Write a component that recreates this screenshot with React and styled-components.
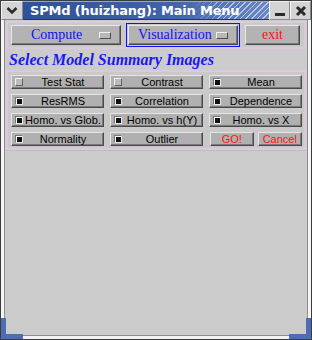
import styled, { createGlobalStyle } from "styled-components";

const Global = createGlobalStyle`
  html, body {
    margin: 0;
    padding: 0;
    background: #cccccc;
  }
`;

const Window = styled.div`
  position: relative;
  box-sizing: border-box;
  width: 312px;
  height: 340px;
  display: flex;
  flex-direction: column;
  background: #cccccc;
  border: 1px solid #3c3c3c;
  box-shadow: inset 0 0 0 3px #f4f4f4, inset 0 0 0 4px #8e8e8e;
  overflow: hidden;
`;

const TitleBar = styled.div`
  display: flex;
  height: 19px;
  background: #e6e6e6;
`;

const FrameButton = styled.div`
  box-sizing: border-box;
  width: ${(p) => p.$w}px;
  height: 19px;
  display: flex;
  align-items: center;
  justify-content: center;
  background: #d4d4d4;
  border: 1px solid;
  border-color: #f4f4f4 #8a8a8a #8a8a8a #f4f4f4;
`;

const Title = styled.div`
  position: relative;
  flex: 1;
  display: flex;
  align-items: center;
  padding-left: 7px;
  color: #ffffff;
  font: bold 13px "DejaVu Sans", sans-serif;
  letter-spacing: -0.2px;
  background: linear-gradient(90deg, #2f5199 0%, #4063a9 60%, #6a88c4 100%);
  border-top: 1px solid #90a8d8;
  border-bottom: 1px solid #1d3670;
  overflow: hidden;

  &::after {
    content: "";
    position: absolute;
    top: 0;
    bottom: 0;
    right: 0;
    width: 76px;
    background: repeating-linear-gradient(
      -45deg,
      rgba(255, 255, 255, 0.55) 0 1px,
      transparent 1px 4px
    );
    -webkit-mask-image: linear-gradient(90deg, transparent, #000 40%);
    mask-image: linear-gradient(90deg, transparent, #000 40%);
  }
`;

const TitleText = styled.span`
  position: relative;
  z-index: 1;
`;

const Body = styled.div`
  flex: 1;
  display: flex;
  flex-direction: column;
  padding: 1px 5px 0 5px;
`;

const Ring = styled.div`
  border: 2px solid #dccadc;
  background: #c9c9c9;
`;

const MenuBar = styled(Ring)`
  display: flex;
  gap: 3px;
  padding: 0 1px;
  height: 24px;
  align-items: center;
`;

const MenuCell = styled.div`
  box-sizing: border-box;
  width: ${(p) => p.$w}px;
  height: 24px;
  padding: 1px;
  border: 1px solid ${(p) => (p.$focus ? "#1010ff" : "transparent")};
  display: flex;
`;

const MenuButton = styled.div`
  flex: 1;
  position: relative;
  display: flex;
  align-items: center;
  justify-content: ${(p) => (p.$menu ? "flex-start" : "center")};
  padding-left: ${(p) => (p.$menu ? p.$indent : 0)}px;
  background: #b3b3b3;
  border: 1px solid;
  border-color: #e8e8e8 #4a4a4a #4a4a4a #e8e8e8;
  box-shadow: inset -1px -1px 0 #777777;
  color: ${(p) => p.$color};
  font: 14px "Liberation Serif", serif;
`;

const MenuIndicator = styled.span`
  position: absolute;
  right: 9px;
  top: 6px;
  width: 10px;
  height: 5px;
  background: #b8b8b8;
  border: 1px solid;
  border-color: #f0f0f0 #505050 #505050 #f0f0f0;
`;

const Heading = styled.div`
  height: 18px;
  padding: 3px 0 0 3px;
  color: #1a1af0;
  font: italic bold 16px "Liberation Serif", serif;
  line-height: 16px;
`;

const Panel = styled(Ring)`
  display: grid;
  grid-template-columns: repeat(3, 93px);
  grid-auto-rows: 14px;
  column-gap: 6px;
  row-gap: 5px;
  padding: 3px 0 2px 3px;
`;

const Check = styled.div`
  box-sizing: border-box;
  position: relative;
  display: flex;
  align-items: center;
  background: #b0b0b0;
  border: 1px solid;
  border-color: #e6e6e6 #4a4a4a #4a4a4a #e6e6e6;
  box-shadow: inset -1px -1px 0 #7a7a7a;
  font: 11px "Liberation Sans", sans-serif;
  color: #000;
`;

const Indicator = styled.span`
  box-sizing: border-box;
  margin-left: 3px;
  width: 8px;
  height: 8px;
  flex: none;
  background: ${(p) => (p.$on ? "#111111" : "#bcbcbc")};
  border: 1px solid;
  border-color: ${(p) =>
    p.$on ? "#777 #e8e8e8 #e8e8e8 #777" : "#f0f0f0 #606060 #606060 #f0f0f0"};
  box-shadow: ${(p) => (p.$on ? "inset 1px 1px 0 #ffffff" : "none")};
`;

const Label = styled.span`
  flex: 1;
  text-align: center;
  white-space: nowrap;
  line-height: 12px;
`;

const ActionCell = styled.div`
  display: flex;
  gap: 4px;
  margin-left: 1px;
`;

const Action = styled(Check)`
  width: ${(p) => p.$w}px;
  justify-content: center;
  color: #ff1010;
`;

const Filler = styled.div`
  flex: 1;
  border-top: 1px solid #bcbcbc;
`;

const Corner = styled.div`
  position: absolute;
  bottom: -1px;
  ${(p) => (p.$side === "left" ? "left: -1px;" : "right: -1px;")}
  width: 23px;
  height: 22px;
  box-sizing: border-box;
  border-bottom: 6px solid #4e6db3;
  ${(p) =>
    p.$side === "left"
      ? "border-left: 6px solid #4e6db3; border-bottom-left-radius: 5px;"
      : "border-right: 6px solid #4e6db3; border-bottom-right-radius: 5px;"}
`;

function Chevron() {
  return (
    <svg width="12" height="9" viewBox="0 0 12 9">
      <path d="M1.5 2 L6 6.5 L10.5 2" fill="none" stroke="#2a2a2a" strokeWidth="2.6" />
    </svg>
  );
}

function Minimize() {
  return (
    <svg width="12" height="12" viewBox="0 0 12 12">
      <rect x="1" y="8" width="10" height="3" fill="#2a2a2a" />
    </svg>
  );
}

function CloseX() {
  return (
    <svg width="12" height="12" viewBox="0 0 12 12">
      <path d="M2 2 L10 10 M10 2 L2 10" stroke="#2a2a2a" strokeWidth="3" />
    </svg>
  );
}

const items = [
  ["Test Stat", false],
  ["Contrast", false],
  ["Mean", true],
  ["ResRMS", true],
  ["Correlation", true],
  ["Dependence", true],
  ["Homo. vs Glob.", true],
  ["Homo. vs h(Y)", true],
  ["Homo. vs X", true],
  ["Normality", true],
  ["Outlier", true],
];

export default function App() {
  return (
    <>
      <Global />
      <Window>
        <TitleBar>
          <FrameButton $w={22}>
            <Chevron />
          </FrameButton>
          <Title>
            <TitleText>SPMd (huizhang): Main Menu</TitleText>
          </Title>
          <FrameButton $w={21}>
            <Minimize />
          </FrameButton>
          <FrameButton $w={21}>
            <CloseX />
          </FrameButton>
        </TitleBar>
        <Body>
          <MenuBar>
            <MenuCell $w={114}>
              <MenuButton $menu $indent={19} $color="#1010ff">
                Compute
                <MenuIndicator />
              </MenuButton>
            </MenuCell>
            <MenuCell $w={114} $focus>
              <MenuButton $menu $indent={9} $color="#1010ff">
                Visualization
                <MenuIndicator />
              </MenuButton>
            </MenuCell>
            <MenuCell $w={59}>
              <MenuButton $color="#ff1010">exit</MenuButton>
            </MenuCell>
          </MenuBar>
          <Heading>Select Model Summary Images</Heading>
          <Panel>
            {items.map(([name, on]) => (
              <Check key={name}>
                <Indicator $on={on} />
                <Label>{name}</Label>
              </Check>
            ))}
            <ActionCell>
              <Action $w={44}>GO!</Action>
              <Action $w={45}>Cancel</Action>
            </ActionCell>
          </Panel>
          <Filler />
        </Body>
        <Corner $side="left" />
        <Corner $side="right" />
      </Window>
    </>
  );
}
